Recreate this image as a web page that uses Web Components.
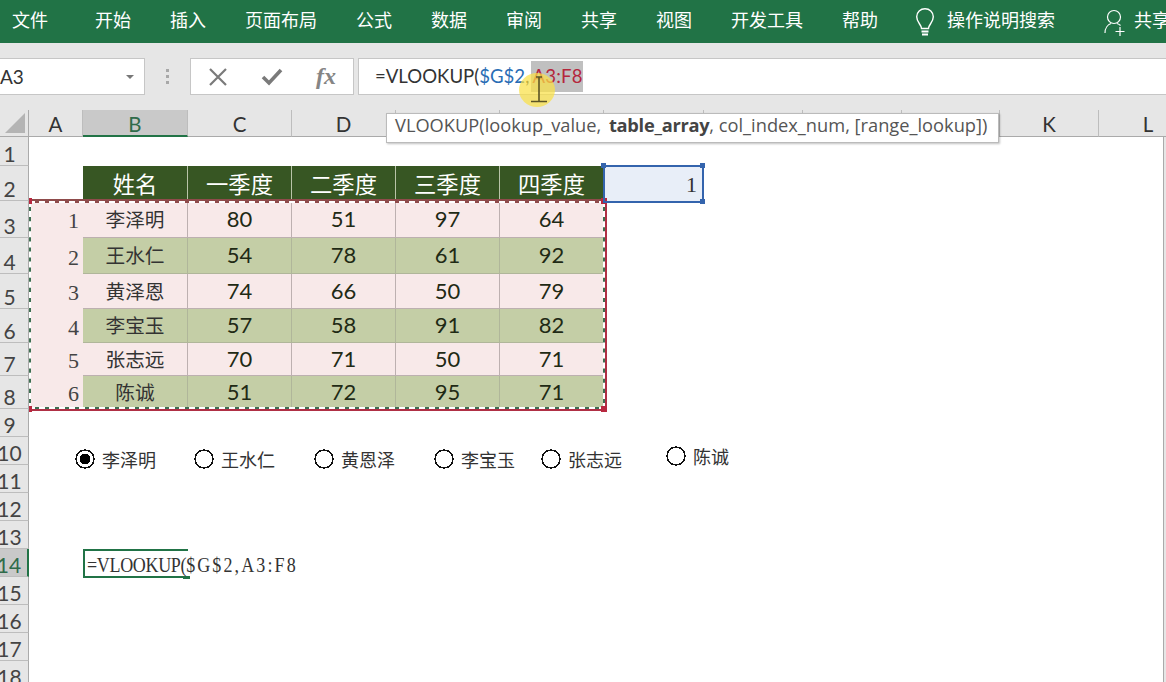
<!DOCTYPE html>
<html lang="zh">
<head>
<meta charset="utf-8">
<title>VLOOKUP</title>
<style>
    html, body { margin: 0; height: 100%; overflow: hidden; background: #e6e6e6; }
    body { font-family: "Noto Sans CJK SC", sans-serif; width: 1166px; height: 682px; position: relative; }
</style>
</head>
<body>
<excel-ribbon>
    <ribbon-tab style="margin-right:8px">文件</ribbon-tab>
    <ribbon-tab>开始</ribbon-tab>
    <ribbon-tab>插入</ribbon-tab>
    <ribbon-tab>页面布局</ribbon-tab>
    <ribbon-tab>公式</ribbon-tab>
    <ribbon-tab>数据</ribbon-tab>
    <ribbon-tab>审阅</ribbon-tab>
    <ribbon-tab>共享</ribbon-tab>
    <ribbon-tab>视图</ribbon-tab>
    <ribbon-tab>开发工具</ribbon-tab>
    <ribbon-tab>帮助</ribbon-tab>
</excel-ribbon>
<formula-bar name="A3"></formula-bar>
<excel-sheet id="sheet">
    <form-radio slot="over" x="75" y="447" checked>李泽明</form-radio>
    <form-radio slot="over" x="194" y="447">王水仁</form-radio>
    <form-radio slot="over" x="314" y="447">黄恩泽</form-radio>
    <form-radio slot="over" x="434" y="447">李宝玉</form-radio>
    <form-radio slot="over" x="541" y="447">张志远</form-radio>
    <form-radio slot="over" x="666" y="444">陈诚</form-radio>
</excel-sheet>
<mouse-halo></mouse-halo>

<template id="ribbon-tpl">
    <style>
        :host {
            display: flex;
            align-items: center;
            gap: 39px;
            height: 43px;
            padding-left: 12px;
            background: #217346;
            box-sizing: border-box;
            overflow: hidden;
            white-space: nowrap;
        }
        .search { display: flex; align-items: center; gap: 12px; margin-left: -2px; color: #fff; font-size: 18px; }
        .share { display: flex; align-items: center; gap: 8px; margin-left: 10px; color: #fff; font-size: 18px; }
        .search span, .share span { position: relative; top: -3px; }
        svg { display: block; flex: none; }
    </style>
    <slot></slot>
    <div class="search">
        <svg width="20" height="30" viewBox="0 0 20 30" fill="none" stroke="#fff" stroke-width="1.4">
            <path d="M6.5 21.5c0-4-4.8-6-4.8-11.7C1.700 5 5.500 1.700 10 1.700s8.300 3.300 8.300 8.100c0 5.700-4.800 7.700-4.800 11.700z"/>
            <path d="M6.500 24.500h7M7 27.500h6" stroke-width="1.800"/>
        </svg>
        <span>操作说明搜索</span>
    </div>
    <div class="share">
        <svg width="22" height="28" viewBox="0 0 22 28" fill="none" stroke="#fff" stroke-width="1.200">
            <circle cx="10" cy="9" r="6.500"/>
            <path d="M1 25c0-5 3-8.500 6-9.500M13 15.500c1.500.5 2.500 1 3.500 2"/>
            <path d="M16 19v9M11.500 23.500h9"/>
        </svg>
        <span>共享</span>
    </div>
</template>

<template id="tab-tpl">
    <style>
        :host { display: block; flex: none; color: #fff; font-size: 18px; line-height: 24px; margin-top: -6px; }
    </style>
    <slot></slot>
</template>

<template id="formula-tpl">
    <style>
        :host {
            display: flex;
            align-items: stretch;
            height: 67px;
            padding: 15px 0;
            box-sizing: border-box;
            background: #e6e6e6;
            overflow: hidden;
            font-family: "Lato", "Noto Sans CJK SC", sans-serif;
            color: #333;
        }
        .box { background: #fff; border: 1px solid #c6c6c6; box-sizing: border-box; display: flex; align-items: center; }
        .name { width: 145px; border-left: 0; font-size: 19px; position: relative; }
        .name span { flex: 1; }
        .name i { width: 0; height: 0; border: 4px solid transparent; border-top: 4px solid #777; border-bottom: 0; margin-right: 10px; }
        .grip { width: 45px; display: flex; flex-direction: column; align-items: center; justify-content: center; gap: 3px; }
        .grip b { width: 3px; height: 3px; background: #a8a8a8; display: block; }
        .btns { width: 164px; justify-content: space-between; padding: 0 17px 0 18px; margin-right: 4px; color: #7a7a7a; }
        .fx { font: italic bold 24px "Liberation Serif", serif; color: #858585; }
        .input { flex: 1; padding-left: 16px; font-size: 18.600px; white-space: nowrap; position: relative; border-right: 0; }
        .blue { color: #2a6db5; }
        .comma { margin-right: 2px; }
        .red { color: #b5263c; background: #c0c0c0; display: inline-block; line-height: 31px; letter-spacing: .2px; padding-left: 1px; }
    </style>
    <div class="box name"><span id="name"></span><i></i></div>
    <div class="grip"><b></b><b></b><b></b></div>
    <div class="box btns">
        <svg width="18" height="18" viewBox="0 0 18 18" stroke="#7a7a7a" stroke-width="2.200"><path d="M1 1l16 16M17 1L1 17"/></svg>
        <svg width="22" height="18" viewBox="0 0 22 18" fill="none" stroke="#7a7a7a" stroke-width="3.600"><path d="M2 9l6 6L20 2"/></svg>
        <span class="fx">fx</span>
    </div>
    <div class="box input"><span>=VLOOKUP(<span class="blue">$G$2</span><span class="comma">,</span><span class="red">A3:F8</span></span></div>
</template>

<template id="sheet-tpl">
    <style>
        :host { display: block; height: 572px; overflow: hidden; background: #e6e6e6; }
        .grid {
            position: relative;
            display: grid;
            width: 1266px;
            height: 579px;
            background: #fff;
            grid-template-columns: 29px 54px 105px repeat(4, 104px) 100px 99px 99px 98px 99px 99px;
            grid-template-rows: 27px 29px 35px 37px 36px 35px 34px 33px 33px 28px 28px 28px 28px 28px 28px 28px 28px 28px 28px;
            font-family: "Lato", "Noto Sans CJK SC", sans-serif;
            color: #333;
        }
        .corner { background: #e6e6e6; border-right: 1px solid #aaa; border-bottom: 1px solid #aaa; position: relative; }
        .corner::after {
            content: ""; position: absolute; left: 5px; top: 3px; width: 20px; height: 20px;
            background: #b4b4b4; clip-path: polygon(100% 0, 100% 100%, 0 100%);
        }
        .col, .row {
            background: #e6e6e6; box-sizing: border-box; display: flex; justify-content: center;
            overflow: visible; white-space: nowrap; line-height: 1;
        }
        .col { font-size: 20.500px; align-items: center; border-bottom: 1px solid #aaa; border-right: 1px solid #bdbdbd; padding-top: 3px; }
        .row { font-size: 21px; align-items: flex-end; border-bottom: 1px solid #bdbdbd; border-right: 1px solid #aaa; padding-right: 9px; padding-bottom: 1px; color: #444; }
        .col.on { background: #c9c9c9; color: #2f6b4a; border-bottom: 2px solid #217346; }
        .row.on { background: #c9c9c9; color: #2f6b4a; border-right: 2px solid #217346; }
        .gutter { position: absolute; left: 1163px; top: 27px; width: 103px; bottom: 0; background: #e6e6e6; border-left: 1px solid #aaa; }
        .ants { position: absolute; left: 29px; top: 89px; width: 578px; height: 212px; box-sizing: border-box; border: 2px solid #b03045; border-top-color: #8f4b4b; border-left: 0; }
        .ants::before { content: ""; position: absolute; inset: 0; border: 2px solid #3f6f52; border-top-color: #8f4b4b; }
        .ants::after { content: ""; position: absolute; inset: 0; border: 2px dashed #fff; }
        .dot { position: absolute; width: 6px; height: 6px; background: #b8283f; }
        .dot.thin { width: 3px; }
        .sel { position: absolute; left: 603px; top: 55px; width: 101px; height: 38px; box-sizing: border-box; border: 2px solid #3464ad; }
        .h { position: absolute; width: 5px; height: 5px; background: #3464ad; }
        .edit { position: absolute; left: 83px; top: 439px; width: 105px; height: 29px; box-sizing: border-box; border: 2px solid #217346; border-right: 0; }
        .edit-h { position: absolute; left: 183px; top: 466px; width: 7px; height: 3px; background: #217346; }
        .typed {
            position: absolute; left: 87px; top: 443px; font: 20px/24px "Liberation Serif", serif;
            color: #333; white-space: nowrap; transform: scaleX(.9); transform-origin: left center;
        }
        .typed .a { letter-spacing: -.37px; }
        .typed .b { letter-spacing: 2.330px; }
        .typed .c { letter-spacing: 2.400px; }
        .tip {
            position: absolute; left: 386px; top: 3px; width: 613px; height: 30px; box-sizing: border-box;
            background: #fff; border: 1px solid #bbb; box-shadow: 1px 1px 2px rgba(0,0,0,.25);
            padding-left: 8px; font: 18.250px/22px "Open Sans", sans-serif; color: #555; white-space: nowrap;
        }
        .tip b { color: #444; margin-left: 3px; letter-spacing: -.27px; }
    </style>
    <div class="grid" id="grid">
        <div class="corner"></div>
        <slot></slot>
        <div class="gutter"></div>
        <div class="ants"></div>
        <div class="dot thin" style="left:29px;top:88px"></div>
        <div class="dot thin" style="left:29px;top:296px"></div>
        <div class="dot" style="left:601px;top:88px"></div>
        <div class="dot" style="left:601px;top:296px"></div>
        <div class="sel"></div>
        <div class="h" style="left:601px;top:53px"></div>
        <div class="h" style="left:700px;top:53px"></div>
        <div class="h" style="left:700px;top:89px"></div>
        <div class="edit"></div>
        <div class="edit-h"></div>
        <div class="typed"><span class="a">=VLOOKUP(</span><span class="b">$G$2,</span><span class="c">A3:F8</span></div>
        <div class="tip">VLOOKUP(lookup_value, <b>table_array</b>, col_index_num, [range_lookup])</div>
        <slot name="over"></slot>
    </div>
</template>

<template id="cell-tpl">
    <style>
        :host {
            display: flex; align-items: center; justify-content: center; box-sizing: border-box;
            color: #333; white-space: nowrap; overflow: hidden; padding-bottom: 2px;
            font-family: "Noto Sans CJK SC", sans-serif; font-size: 19.700px; font-weight: 400;
        }
        :host([kind="head"]) { background: #375623; color: #fff; font-size: 22.300px; border-right: 1px solid #b9c4a8; }
        :host([kind="pink"]) { background: #f8e9e9; border-right: 1px solid #bdb0b0; border-bottom: 1px solid #bdb0b0; }
        :host([kind="olive"]) { background: #c4cea6; border-right: 1px solid #b0b69a; border-bottom: 1px solid #b0b69a; }
        :host([num]) { font: 22px "Lato", sans-serif; color: #1f2a15; }
        :host([index]) { justify-content: flex-end; padding: 3px 4px 0 0; background: #f8e9e9; font: 22px "Liberation Serif", serif; color: #444; }
        :host([kind="g2"]) { justify-content: flex-end; padding: 2px 7px 0 0; background: #e8eef8; font: 22px "Liberation Serif", serif; color: #333; }
    </style>
    <slot></slot>
</template>

<template id="radio-tpl">
    <style>
        :host {
            position: absolute; display: flex; align-items: center; gap: 7px;
            font: 18px/24px "Noto Sans CJK SC", sans-serif; color: #333; white-space: nowrap;
        }
        svg { display: block; flex: none; }
        #dot { display: none; }
        svg.on #dot { display: block; }
    </style>
    <svg id="mark" width="20" height="20" viewBox="0 0 20 20" shape-rendering="crispEdges">
        <circle cx="10" cy="10" r="9" fill="#fff" stroke="#111" stroke-width="1.500"/>
        <circle id="dot" cx="10" cy="10" r="5.500" fill="#000"/>
    </svg>
    <slot></slot>
</template>

<template id="halo-tpl">
    <style>
        :host { position: absolute; left: 519px; top: 73px; width: 36px; height: 34px; }
        .glow { position: absolute; inset: 0; border-radius: 50%; background: rgba(250,225,70,.72); }
        svg { position: absolute; left: 9px; top: 3px; }
    </style>
    <div class="glow"></div>
    <svg width="22" height="28" viewBox="0 0 22 28" fill="none" stroke="#5b5426" stroke-width="1.600">
        <path d="M8 1h6M11 1v24M3 25.500h16"/>
    </svg>
</template>

<script>
class ExcelRibbon extends HTMLElement {
    constructor() {
        super();
        this.attachShadow({ mode: 'open' });
        this.shadowRoot.appendChild(document.getElementById('ribbon-tpl').content.cloneNode(true));
    }
}
customElements.define('excel-ribbon', ExcelRibbon);

class RibbonTab extends HTMLElement {
    constructor() {
        super();
        this.attachShadow({ mode: 'open' });
        this.shadowRoot.appendChild(document.getElementById('tab-tpl').content.cloneNode(true));
    }
}
customElements.define('ribbon-tab', RibbonTab);

class FormulaBar extends HTMLElement {
    constructor() {
        super();
        this.attachShadow({ mode: 'open' });
        this.shadowRoot.appendChild(document.getElementById('formula-tpl').content.cloneNode(true));
    }
    connectedCallback() {
        this.shadowRoot.getElementById('name').textContent = this.getAttribute('name');
    }
}
customElements.define('formula-bar', FormulaBar);

class MouseHalo extends HTMLElement {
    constructor() {
        super();
        this.attachShadow({ mode: 'open' });
        this.shadowRoot.appendChild(document.getElementById('halo-tpl').content.cloneNode(true));
    }
}
customElements.define('mouse-halo', MouseHalo);

class SheetCell extends HTMLElement {
    constructor() {
        super();
        this.attachShadow({ mode: 'open' });
        this.shadowRoot.appendChild(document.getElementById('cell-tpl').content.cloneNode(true));
    }
    connectedCallback() {
        this.style.gridColumn = this.getAttribute('col');
        this.style.gridRow = this.getAttribute('row');
    }
}
customElements.define('sheet-cell', SheetCell);

class FormRadio extends HTMLElement {
    constructor() {
        super();
        this.attachShadow({ mode: 'open' });
        this.shadowRoot.appendChild(document.getElementById('radio-tpl').content.cloneNode(true));
    }
    connectedCallback() {
        // y in the attribute is the page coordinate, the sheet starts at 110
        this.style.left = this.getAttribute('x') + 'px';
        this.style.top = (this.getAttribute('y') - 110) + 'px';
        if (this.hasAttribute('checked')) this.shadowRoot.getElementById('mark').classList.add('on');
    }
}
customElements.define('form-radio', FormRadio);

class ExcelSheet extends HTMLElement {
    constructor() {
        super();
        this.attachShadow({ mode: 'open' });
        this.shadowRoot.appendChild(document.getElementById('sheet-tpl').content.cloneNode(true));
        const grid = this.shadowRoot.getElementById('grid');
        const corner = grid.querySelector('.corner');
        // E to J sit under the function tooltip, so they keep no label
        'ABCD      KL'.split('').forEach((c, i) => {
            const d = document.createElement('div');
            d.className = 'col' + (c === 'B' ? ' on' : '');
            d.textContent = c.trim();
            d.style.gridColumn = i + 2;
            d.style.gridRow = 1;
            corner.after(d);
        });
        for (let r = 1; r <= 18; r++) {
            const d = document.createElement('div');
            d.className = 'row' + (r === 14 ? ' on' : '');
            d.textContent = r;
            d.style.gridColumn = 1;
            d.style.gridRow = r + 1;
            corner.after(d);
        }
    }
}
customElements.define('excel-sheet', ExcelSheet);

const sheet = document.getElementById('sheet');
function addCell(col, row, text, kind, flag) {
    const c = document.createElement('sheet-cell');
    c.setAttribute('col', col);
    c.setAttribute('row', row);
    if (kind) c.setAttribute('kind', kind);
    if (flag) c.setAttribute(flag, '');
    c.textContent = text;
    sheet.appendChild(c);
}
['姓名', '一季度', '二季度', '三季度', '四季度'].forEach((t, i) => addCell(i + 3, 3, t, 'head'));
const rows = [
    ['李泽明', 80, 51, 97, 64],
    ['王水仁', 54, 78, 61, 92],
    ['黄泽恩', 74, 66, 50, 79],
    ['李宝玉', 57, 58, 91, 82],
    ['张志远', 70, 71, 50, 71],
    ['陈诚', 51, 72, 95, 71],
];
rows.forEach((r, i) => {
    const kind = i % 2 ? 'olive' : 'pink';
    addCell(2, i + 4, i + 1, '', 'index');
    r.forEach((v, j) => addCell(j + 3, i + 4, v, kind, j ? 'num' : ''));
});
addCell(8, 3, 1, 'g2');
</script>
</body>
</html>
